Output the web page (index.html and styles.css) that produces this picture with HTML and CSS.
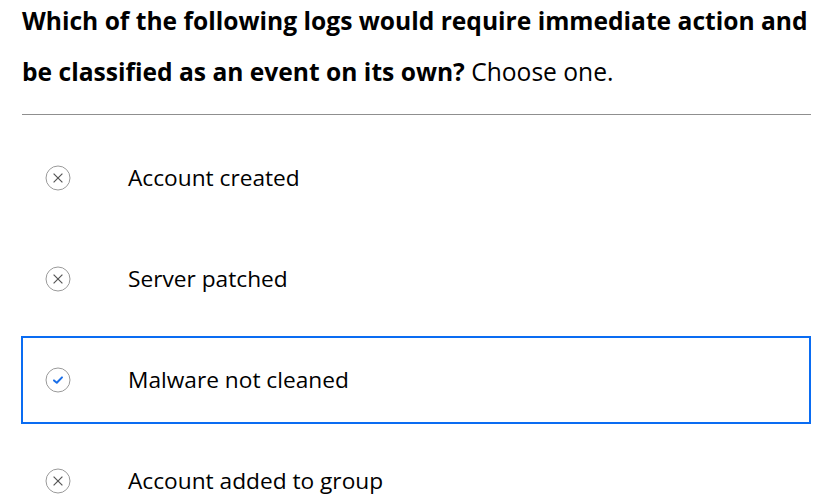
FILE: index.html
```html
<!DOCTYPE html>
<html>
<head>
<meta charset="utf-8">
<link rel="stylesheet" href="styles.css">
</head>
<body>
<div class="quiz">
  <p class="question"><strong>Which of the following logs would require immediate action and be classified as an event on its own?</strong> Choose one.</p>
  <hr class="divider">
  <ul class="options">
    <li class="option">
      <span class="icon wrong"><svg viewBox="0 0 26 26" width="26" height="26"><circle cx="13" cy="13" r="12" fill="none" stroke="#9a9a9a" stroke-width="1"/><path d="M8.6 8.6 L17.4 17.4 M17.4 8.6 L8.6 17.4" stroke="#555" stroke-width="1.2" fill="none"/></svg></span>
      <span class="label">Account created</span>
    </li>
    <li class="option">
      <span class="icon wrong"><svg viewBox="0 0 26 26" width="26" height="26"><circle cx="13" cy="13" r="12" fill="none" stroke="#9a9a9a" stroke-width="1"/><path d="M8.6 8.6 L17.4 17.4 M17.4 8.6 L8.6 17.4" stroke="#555" stroke-width="1.2" fill="none"/></svg></span>
      <span class="label">Server patched</span>
    </li>
    <li class="option selected">
      <span class="icon right"><svg viewBox="0 0 26 26" width="26" height="26"><circle cx="13" cy="13" r="12" fill="none" stroke="#9a9a9a" stroke-width="1"/><path d="M9 13.4 L11.8 15.8 L17 10.4" stroke="#1a6fe8" stroke-width="2" fill="none" stroke-linecap="round" stroke-linejoin="round"/></svg></span>
      <span class="label">Malware not cleaned</span>
    </li>
    <li class="option">
      <span class="icon wrong"><svg viewBox="0 0 26 26" width="26" height="26"><circle cx="13" cy="13" r="12" fill="none" stroke="#9a9a9a" stroke-width="1"/><path d="M8.6 8.6 L17.4 17.4 M17.4 8.6 L8.6 17.4" stroke="#555" stroke-width="1.2" fill="none"/></svg></span>
      <span class="label">Account added to group</span>
    </li>
  </ul>
</div>
</body>
</html>
```
FILE: styles.css
```css
html, body {
  margin: 0;
  padding: 0;
  background: #fff;
}
body {
  font-family: "Open Sans", "Noto Sans", sans-serif;
  color: #000;
}
.quiz {
  padding: 0 25px 0 22px;
}
.question {
  margin: -5px 0 0 0;
  font-size: 24.6px;
  line-height: 51px;
}
.question strong {
  font-weight: 700;
}
.divider {
  border: 0;
  border-top: 1px solid #8f8f8f;
  margin: 17px 0 19px 0;
}
.options {
  list-style: none;
  margin: 0;
  padding: 0;
  display: flex;
  flex-direction: column;
  gap: 13px;
}
.option {
  height: 88px;
  box-sizing: border-box;
  border: 2px solid transparent;
  display: flex;
  align-items: center;
  margin-left: -1px;
}
.option.selected {
  border-color: #0a6cf2;
}
.icon {
  width: 26px;
  height: 26px;
  margin-left: 22px;
  display: flex;
}
.label {
  margin-left: 57px;
  font-size: 22.7px;
  position: relative;
  top: -1px;
}
```
